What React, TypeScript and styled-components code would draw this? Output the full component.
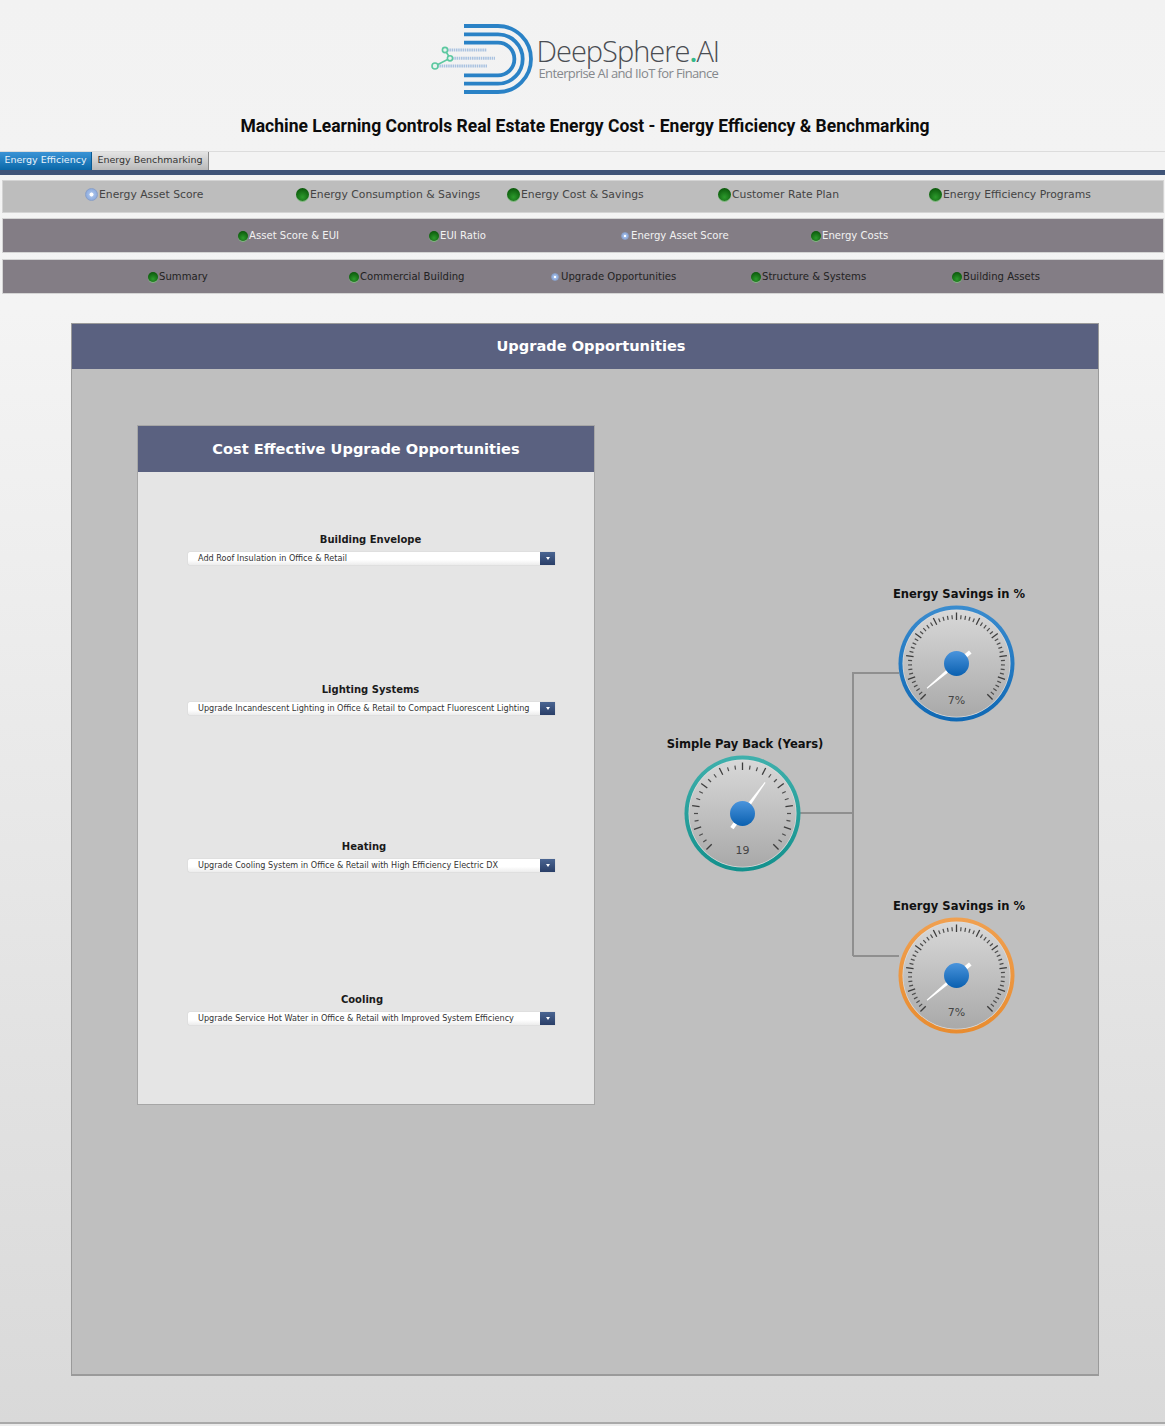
import React from "react";
import styled, { createGlobalStyle } from "styled-components";

const GlobalStyle = createGlobalStyle`
  html, body {
    margin: 0;
    padding: 0;
  }
  body {
    font-family: "DejaVu Sans", Verdana, sans-serif;
    background: #f2f2f2;
  }
`;

const Page = styled.div`
  width: 1165px;
  height: 1426px;
  overflow: hidden;
  background: linear-gradient(#f2f2f2 0, #f4f4f4 310px, #d9d9d9 100%);
`;

const Header = styled.header`
  height: 151px;
  padding-top: 24px;
  box-sizing: border-box;
`;

const Logo = styled.div`
  display: flex;
  align-items: flex-start;
  justify-content: center;
  height: 70px;
  padding-right: 15px;
`;

const LogoText = styled.div`
  display: flex;
  flex-direction: column;
  padding-top: 11px;
  margin-left: 2px;
  width: 184px;
`;

const LogoName = styled.div`
  font-family: "Open Sans", sans-serif;
  font-weight: 300;
  font-size: 29px;
  line-height: 31px;
  letter-spacing: -1px;
  color: #4a4d52;
  white-space: nowrap;
`;

const LogoDot = styled.span`
  color: #35b98a;
  font-weight: 600;
`;

const LogoTag = styled.div`
  font-family: "Open Sans", sans-serif;
  font-size: 13px;
  line-height: 14px;
  letter-spacing: -0.62px;
  color: #85888c;
  white-space: nowrap;
  margin-left: 2px;
`;

const Title = styled.h1`
  margin: 21px 0 0;
  padding-left: 5px;
  font-family: Roboto, sans-serif;
  font-weight: 700;
  font-size: 17.5px;
  line-height: 22px;
  color: #0c0c0c;
  text-align: center;
`;

const TabBar = styled.div`
  display: flex;
  height: 18px;
  border-top: 1px solid #dcdcdc;
  border-bottom: 5px solid #3f5478;
  background: #f3f3f3;
`;

const Tab = styled.div<{ $active?: boolean; $width: number }>`
  width: ${(p) => p.$width}px;
  box-sizing: border-box;
  font-size: 9.5px;
  line-height: 15px;
  text-align: center;
  white-space: nowrap;
  color: ${(p) => (p.$active ? "#e8f2fa" : "#333")};
  background: ${(p) =>
    p.$active
      ? "linear-gradient(#3a93d6, #0a68a8)"
      : "linear-gradient(#e4e4e4, #b9b9b9)"};
  border-right: 1px solid ${(p) => (p.$active ? "#0a5a92" : "#8a8a8a")};
`;

const NavRow = styled.nav<{
  $bg: string;
  $height: number;
  $top: number;
  $left: number;
  $start: number;
  $col: number;
  $cols: number;
  $lift: number;
}>`
  display: grid;
  grid-template-columns: repeat(${(p) => p.$cols}, ${(p) => p.$col}px);
  align-items: center;
  box-sizing: border-box;
  height: ${(p) => p.$height}px;
  margin: ${(p) => p.$top}px 1px 0 ${(p) => p.$left}px;
  padding-left: ${(p) => p.$start}px;
  padding-bottom: ${(p) => p.$lift}px;
  background: ${(p) => p.$bg};
  border: 1px solid #d4d4d4;
`;

const NavItem = styled.div<{ $color: string; $size: number }>`
  display: flex;
  align-items: center;
  gap: 1px;
  font-size: ${(p) => p.$size}px;
  color: ${(p) => p.$color};
  white-space: nowrap;
`;

const GreenDot = styled.span<{ $size: number }>`
  flex: none;
  width: ${(p) => p.$size}px;
  height: ${(p) => p.$size}px;
  border-radius: 50%;
  background: radial-gradient(circle at 50% 70%, #2c9a2c, #0d5c0d 75%);
  box-shadow: 0 1px 0 #7fb97f;
`;

const SelectedDot = styled.span<{ $size: number; $pad: number }>`
  flex: none;
  box-sizing: border-box;
  width: ${(p) => p.$size}px;
  height: ${(p) => p.$size}px;
  margin: 0 ${(p) => p.$pad}px;
  border-radius: 50%;
  background: radial-gradient(circle, #fff 0 22%, #a5bfe8 30%, #7f9fd8 100%);
  border: 1px solid #8aa0c8;
`;

const Panel = styled.section`
  margin: 29px 66px 0 71px;
  height: 1053px;
  box-sizing: border-box;
  border: 1px solid #9a9a9a;
  border-bottom-width: 2px;
  background: #bfbfbf;
`;

const PanelHeader = styled.div<{ $size: number; $indent: number; $height: number; $line: number }>`
  height: ${(p) => p.$height}px;
  padding-left: ${(p) => p.$indent}px;
  background: #5a6180;
  color: #fff;
  font-size: ${(p) => p.$size}px;
  font-weight: 700;
  line-height: ${(p) => p.$line}px;
  text-align: center;
`;

const PanelBody = styled.div`
  display: flex;
  padding: 56px 0 0 65px;
`;

const Card = styled.div`
  flex: none;
  width: 458px;
  height: 680px;
  box-sizing: border-box;
  border: 1px solid #a6a6a6;
  background: #e5e5e5;
`;

const CardBody = styled.div`
  display: flex;
  flex-direction: column;
  padding-left: 50px;
`;

const Field = styled.div<{ $top: number }>`
  width: 367px;
  margin-top: ${(p) => p.$top}px;
`;

const FieldLabel = styled.div<{ $shift: number }>`
  height: 20px;
  font-size: 10px;
  font-weight: 700;
  line-height: 16px;
  color: #1a1a1a;
  text-align: center;
  padding-right: ${(p) => p.$shift}px;
`;

const Select = styled.div`
  display: flex;
  height: 13px;
  background: linear-gradient(#ffffff 60%, #ececec);
  border-radius: 2px 0 0 2px;
  box-shadow: 0 0 1px #aaa;
`;

const SelectValue = styled.div`
  flex: 1;
  min-width: 0;
  padding-left: 10px;
  font-size: 8.1px;
  line-height: 13px;
  color: #333;
  white-space: nowrap;
`;

const SelectButton = styled.div`
  flex: none;
  width: 15px;
  display: flex;
  align-items: center;
  justify-content: center;
  background: linear-gradient(#4a6592, #2a3f68);
  &::after {
    content: "";
    border-left: 2px solid transparent;
    border-right: 2px solid transparent;
    border-top: 3px solid #fff;
  }
`;

const Diagram = styled.div`
  position: relative;
  flex: 1;
  height: 680px;
`;

const Connector = styled.div<{ $x: number; $y: number; $w: number; $h: number }>`
  position: absolute;
  left: ${(p) => p.$x}px;
  top: ${(p) => p.$y}px;
  width: ${(p) => p.$w}px;
  height: ${(p) => p.$h}px;
  background: #8f8f8f;
`;

const GaugeNode = styled.div<{ $x: number; $y: number }>`
  position: absolute;
  left: ${(p) => p.$x}px;
  top: ${(p) => p.$y}px;
  width: 160px;
  display: flex;
  flex-direction: column;
  align-items: center;
`;

const GaugeTitle = styled.div`
  height: 16px;
  margin: 0 0 1px 6px;
  font-size: 11.55px;
  font-weight: 700;
  line-height: 12px;
  color: #111;
  white-space: nowrap;
`;

const GaugeValue = styled.text`
  font-family: "DejaVu Sans", sans-serif;
  font-size: 11px;
  fill: #444;
  text-anchor: middle;
`;

const PageRule = styled.div`
  height: 2px;
  margin-top: 46px;
  background: #a9a9a9;
  border-bottom: 2px solid #ececec;
`;

const Ticks = ({ minor }: { minor: number }) => {
  const out: React.ReactNode[] = [];
  const total = 10 * minor;
  for (let i = 0; i <= total; i++) {
    const major = i % minor === 0;
    const a = ((135 + (270 * i) / total) * Math.PI) / 180;
    const r1 = major ? 43.5 : 44.5;
    const r2 = major ? 51 : 48.5;
    out.push(
      <line
        key={i}
        x1={58.5 + r1 * Math.cos(a)}
        y1={58.5 + r1 * Math.sin(a)}
        x2={58.5 + r2 * Math.cos(a)}
        y2={58.5 + r2 * Math.sin(a)}
        stroke={major ? "#3c3c3c" : "#4c4c4c"}
        strokeWidth={major ? 1.3 : 1.2}
      />
    );
  }
  return <g>{out}</g>;
};

type GaugeProps = {
  id: string;
  ringTop: string;
  ringBottom: string;
  minor: number;
  angle: number;
  value: string;
};

const Gauge = ({ id, ringTop, ringBottom, minor, angle, value }: GaugeProps) => (
  <svg width="117" height="117" viewBox="0 0 117 117">
    <defs>
      <linearGradient id={`ring-${id}`} x1="0" y1="0" x2="0" y2="1">
        <stop offset="0" stopColor={ringTop} />
        <stop offset="1" stopColor={ringBottom} />
      </linearGradient>
      <linearGradient id={`face-${id}`} x1="0" y1="0" x2="0" y2="1">
        <stop offset="0" stopColor="#d8d8d8" />
        <stop offset="1" stopColor="#a9a9a9" />
      </linearGradient>
      <linearGradient id={`hub-${id}`} x1="0" y1="0" x2="0" y2="1">
        <stop offset="0" stopColor="#4a94dc" />
        <stop offset="1" stopColor="#0a60b0" />
      </linearGradient>
    </defs>
    <circle cx="58.5" cy="58.5" r="58" fill={`url(#ring-${id})`} />
    <circle cx="58.5" cy="58.5" r="54" fill="#dcdcdc" />
    <circle cx="58.5" cy="58.5" r="53.3" fill={`url(#face-${id})`} />
    <Ticks minor={minor} />
    <g transform={`rotate(${angle} 58.5 58.5)`}>
      <polygon points="58,20 59,20 60.5,58.5 56.5,58.5" fill="#fff" />
      <rect x="56.5" y="58.5" width="4" height="18" fill="#fff" />
    </g>
    <circle cx="58.5" cy="58.5" r="12.5" fill={`url(#hub-${id})`} />
    <GaugeValue x="58.5" y="98.5">
      {value}
    </GaugeValue>
  </svg>
);

const LogoMark = () => (
  <svg width="105" height="70" viewBox="430 24 105 70">
    <g fill="none" stroke="#2a82c6" strokeWidth="3.8">
      <path d="M464 26 H498 A33 33 0 0 1 498 92 H464" />
      <path d="M464 34.3 H498 A24.7 24.7 0 0 1 498 83.7 H464" />
      <path d="M464 42.6 H498 A16.4 16.4 0 0 1 498 75.4 H464" />
    </g>
    <g fill="none" stroke="#a9c2e0" strokeWidth="3" strokeDasharray="1.5 0.7">
      <path d="M445 50 H487" />
      <path d="M450 58.3 H495" />
      <path d="M435 66 H487" />
    </g>
    <g fill="#e8f3ee" stroke="#5cc8a0" strokeWidth="1.6">
      <path d="M445 50 L450 58.3 L435 66" fill="none" />
      <circle cx="445" cy="50" r="2.6" />
      <circle cx="450" cy="58.3" r="2.6" />
      <circle cx="435" cy="66" r="3" />
    </g>
  </svg>
);

const topNav = [
  ["Energy Asset Score", true],
  ["Energy Consumption & Savings", false],
  ["Energy Cost & Savings", false],
  ["Customer Rate Plan", false],
  ["Energy Efficiency Programs", false],
] as const;

const midNav = [
  ["Asset Score & EUI", false],
  ["EUI Ratio", false],
  ["Energy Asset Score", true],
  ["Energy Costs", false],
] as const;

const subNav = [
  ["Summary", false],
  ["Commercial Building", false],
  ["Upgrade Opportunities", true],
  ["Structure & Systems", false],
  ["Building Assets", false],
] as const;

const fields = [
  { label: "Building Envelope", value: "Add Roof Insulation in Office & Retail", top: 60, shift: 2 },
  { label: "Lighting Systems", value: "Upgrade Incandescent Lighting in Office & Retail to Compact Fluorescent Lighting", top: 117, shift: 2 },
  { label: "Heating", value: "Upgrade Cooling System in Office & Retail with High Efficiency Electric DX", top: 124, shift: 15 },
  { label: "Cooling", value: "Upgrade Service Hot Water in Office & Retail with Improved System Efficiency", top: 120, shift: 19 },
];

const NavItems = ({
  items,
  dot,
  selected,
  pad,
  color,
  size,
}: {
  items: readonly (readonly [string, boolean])[];
  dot: number;
  selected: number;
  pad: number;
  color: string;
  size: number;
}) => (
  <>
    {items.map(([label, active]) => (
      <NavItem key={label} $color={color} $size={size}>
        {active ? <SelectedDot $size={selected} $pad={pad} /> : <GreenDot $size={dot} />}
        {label}
      </NavItem>
    ))}
  </>
);

export default function App() {
  return (
    <Page>
      <GlobalStyle />
      <Header>
        <Logo>
          <LogoMark />
          <LogoText>
            <LogoName>
              DeepSphere<LogoDot>.</LogoDot>AI
            </LogoName>
            <LogoTag>Enterprise AI and IIoT for Finance</LogoTag>
          </LogoText>
        </Logo>
        <Title>Machine Learning Controls Real Estate Energy Cost - Energy Efficiency &amp; Benchmarking</Title>
      </Header>
      <TabBar>
        <Tab $active $width={92}>Energy Efficiency</Tab>
        <Tab $width={117}>Energy Benchmarking</Tab>
      </TabBar>
      <NavRow $bg="#bdbdbd" $height={33} $top={5} $left={2} $start={82} $col={211} $cols={5} $lift={5}>
        <NavItems items={topNav} dot={13} selected={13} pad={0} color="#444" size={10.8} />
      </NavRow>
      <NavRow $bg="#837d85" $height={35} $top={5} $left={2} $start={235} $col={191} $cols={4} $lift={0}>
        <NavItems items={midNav} dot={10} selected={8} pad={1} color="#f2f2f2" size={10.1} />
      </NavRow>
      <NavRow $bg="#837d85" $height={35} $top={6} $left={2} $start={145} $col={201} $cols={5} $lift={0}>
        <NavItems items={subNav} dot={10} selected={8} pad={1} color="#222" size={10.1} />
      </NavRow>
      <Panel>
        <PanelHeader $size={14.6} $indent={12} $height={45} $line={43}>Upgrade Opportunities</PanelHeader>
        <PanelBody>
          <Card>
            <PanelHeader $size={14.6} $indent={0} $height={46} $line={46}>Cost Effective Upgrade Opportunities</PanelHeader>
            <CardBody>
              {fields.map((f) => (
                <Field key={f.label} $top={f.top}>
                  <FieldLabel $shift={f.shift}>{f.label}</FieldLabel>
                  <Select>
                    <SelectValue>{f.value}</SelectValue>
                    <SelectButton />
                  </Select>
                </Field>
              ))}
            </CardBody>
          </Card>
          <Diagram>
            <Connector $x={205} $y={387} $w={53} $h={1.5} />
            <Connector $x={257} $y={247} $w={1.5} $h={284} />
            <Connector $x={258} $y={247} $w={46} $h={1.5} />
            <Connector $x={258} $y={530} $w={46} $h={1.5} />
            <GaugeNode $x={281} $y={163}>
              <GaugeTitle>Energy Savings in %</GaugeTitle>
              <Gauge id="top" ringTop="#3a8ccf" ringBottom="#0f68b4" minor={5} angle={-130} value="7%" />
            </GaugeNode>
            <GaugeNode $x={67} $y={313}>
              <GaugeTitle>Simple Pay Back (Years)</GaugeTitle>
              <Gauge id="mid" ringTop="#3fb0ac" ringBottom="#12908c" minor={3} angle={36} value="19" />
            </GaugeNode>
            <GaugeNode $x={281} $y={475}>
              <GaugeTitle>Energy Savings in %</GaugeTitle>
              <Gauge id="bottom" ringTop="#f0a050" ringBottom="#e88c30" minor={5} angle={-130} value="7%" />
            </GaugeNode>
          </Diagram>
        </PanelBody>
      </Panel>
      <PageRule />
    </Page>
  );
}
